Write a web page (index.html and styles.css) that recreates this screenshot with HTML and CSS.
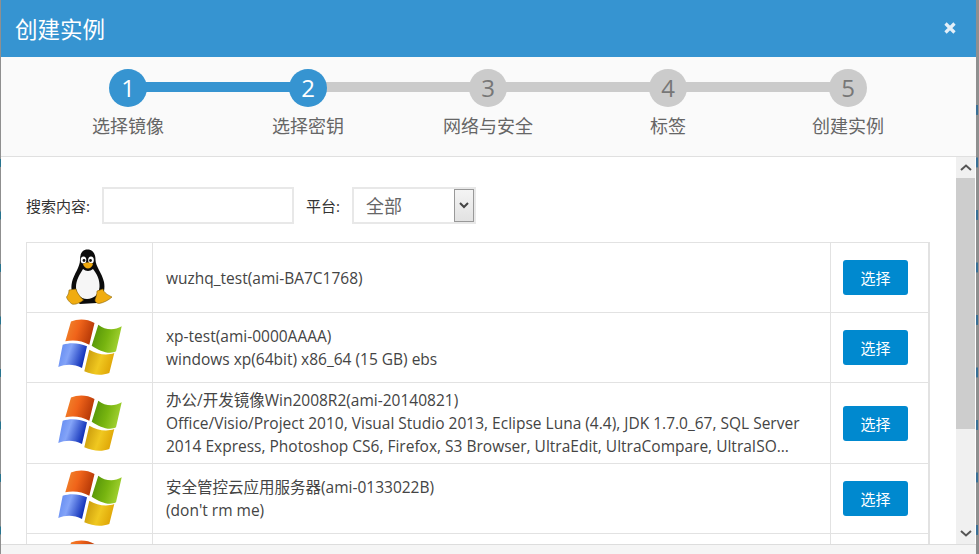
FILE: index.html
```html
<!DOCTYPE html>
<html lang="zh">
<head>
  <meta charset="UTF-8">
  <meta name="viewport" content="width=device-width, initial-scale=1.0">
  <title>创建实例</title>
  <link rel="stylesheet" href="styles.css">
</head>
<body>
  <svg class="defs" width="0" height="0" aria-hidden="true">
    <defs>
      <linearGradient id="red" x1="0" y1="0" x2="1" y2="0.3">
        <stop offset="0" stop-color="#f08a30"/><stop offset="0.5" stop-color="#f0641a"/><stop offset="1" stop-color="#b83a08"/>
      </linearGradient>
      <linearGradient id="green" x1="0" y1="0" x2="1" y2="0.3">
        <stop offset="0" stop-color="#4c8c08"/><stop offset="0.6" stop-color="#78b510"/><stop offset="1" stop-color="#a0d030"/>
      </linearGradient>
      <linearGradient id="blue" x1="0" y1="0" x2="1" y2="0.3">
        <stop offset="0" stop-color="#5c86f0"/><stop offset="0.45" stop-color="#84a4f8"/><stop offset="1" stop-color="#1030b8"/>
      </linearGradient>
      <linearGradient id="yellow" x1="0" y1="0" x2="1" y2="0.3">
        <stop offset="0" stop-color="#c09008"/><stop offset="0.6" stop-color="#f0c820"/><stop offset="1" stop-color="#e0a808"/>
      </linearGradient>
      <symbol id="winlogo" viewBox="0 0 64 57">
        <path fill="url(#red)" d="M13 2.500C20 -0.500 29 -0.500 36.500 4L31.300 25.700C24 21.500 15 20.500 7.300 22.300Z"/>
        <path fill="url(#green)" d="M40.300 5.700C47 11 56 12 63.700 7.300L58 32.300C51 36 42 32 33.700 26.700Z"/>
        <path fill="url(#blue)" d="M4.700 25.700C13 23 21 24 29 27.300L24 49C16 45 8 45 0.300 48Z"/>
        <path fill="url(#yellow)" d="M31.300 30.700C39 35 48 37 56.300 34L51.300 54C43 57 35 56 26.300 52.300Z"/>
      </symbol>
      <symbol id="tux" viewBox="0 0 47 57">
        <path fill="#0c0c0c" d="M21.500 0.500C27 0.500 29.500 5 29.500 11C29.500 17 36 24 38 33C39.500 41 37 50 31 54L14 55C7 50 4 42 6 33C8 25 14 18 14 11C14 5 16 0.500 21.500 0.500Z"/>
        <path fill="#f6f6f6" d="M17 20C20 22.500 24 22.500 27 20C31 25 34 31 33.500 38C33 45 28 50 21 50C14 50 10 44 10 38C10 31 14 25 17 20Z"/>
        <ellipse cx="17.500" cy="11" rx="2.800" ry="3.500" fill="#fff"/>
        <ellipse cx="25" cy="11" rx="2.800" ry="3.500" fill="#fff"/>
        <circle cx="18" cy="11.500" r="1.400" fill="#111"/>
        <circle cx="24.500" cy="11.500" r="1.400" fill="#111"/>
        <path fill="#eda80f" d="M17 15C19.500 13 24.500 13 27 15C26.500 17.500 24 19.500 22 19.500C20 19.500 17.500 17.500 17 15Z"/>
        <path fill="#f0ac10" stroke="#8a6408" stroke-width="0.600" d="M3 41L10 40C11 44 15 49 17.500 51C14 54 9 56 6 55C3 53 1 50 0.500 48C2 46 3 44 3 41Z"/>
        <path fill="#f0ac10" stroke="#8a6408" stroke-width="0.600" d="M31 42L37 40C38 44 42 46 46 48C43 51 37 54 33 54.500C31 54.500 29 53 29 51C30 48 31 45 31 42Z"/>
      </symbol>
    </defs>
  </svg>

  <div class="modal">
    <div class="modal-header">
      <h3>创建实例</h3>
      <svg class="close" width="12" height="12" viewBox="0 0 12 12"><path d="M1.500 1.500L10.500 10.500M10.500 1.500L1.500 10.500" stroke="#e4eff8" stroke-width="3.200"/></svg>
    </div>

    <div class="steps">
      <div class="step done"><span class="num">1</span><span class="name">选择镜像</span></div>
      <div class="step active"><span class="num">2</span><span class="name">选择密钥</span></div>
      <div class="step"><span class="num">3</span><span class="name">网络与安全</span></div>
      <div class="step"><span class="num">4</span><span class="name">标签</span></div>
      <div class="step"><span class="num">5</span><span class="name">创建实例</span></div>
    </div>

    <div class="modal-body">
      <div class="content">
        <form class="search">
          <label class="search-label">搜索内容:</label>
          <input type="text" class="search-input">
          <label class="platform-label">平台:</label>
          <div class="select">
            <span class="select-value">全部</span>
            <span class="select-arrow">
              <svg width="10" height="7" viewBox="0 0 10 7"><path d="M1 1L5 5L9 1" fill="none" stroke="#444" stroke-width="2"/></svg>
            </span>
          </div>
        </form>

        <table class="images">
          <tr class="row-a">
            <td class="logo"><svg class="tux" width="47" height="57"><use href="#tux"/></svg></td>
            <td class="desc">wuzhq_test(ami-BA7C1768)</td>
            <td class="action"><button type="button">选择</button></td>
          </tr>
          <tr class="row-a">
            <td class="logo"><svg width="64" height="57"><use href="#winlogo"/></svg></td>
            <td class="desc">xp-test(ami-0000AAAA)<br>windows xp(64bit) x86_64 (15 GB) ebs</td>
            <td class="action"><button type="button">选择</button></td>
          </tr>
          <tr class="row-c">
            <td class="logo"><svg width="64" height="57"><use href="#winlogo"/></svg></td>
            <td class="desc">办公/开发镜像Win2008R2(ami-20140821)<br>Office/Visio/Project 2010, Visual Studio 2013, Eclipse Luna (4.4), JDK 1.7.0_67, SQL Server 2014 Express, Photoshop CS6, Firefox, S3 Browser, UltraEdit, UltraCompare, UltraISO...</td>
            <td class="action"><button type="button">选择</button></td>
          </tr>
          <tr class="row-a">
            <td class="logo"><svg width="64" height="57"><use href="#winlogo"/></svg></td>
            <td class="desc">安全管控云应用服务器(ami-0133022B)<br>(don't rm me)</td>
            <td class="action"><button type="button">选择</button></td>
          </tr>
          <tr class="row-a">
            <td class="logo"><svg width="64" height="57"><use href="#winlogo"/></svg></td>
            <td class="desc"></td>
            <td class="action"></td>
          </tr>
        </table>
      </div>

      <div class="scrollbar">
        <div class="scroll-btn up"><svg width="12" height="7" viewBox="0 0 12 7"><path d="M1 6L6 1.500L11 6" fill="none" stroke="#555" stroke-width="2"/></svg></div>
        <div class="scroll-thumb"></div>
        <div class="scroll-track"></div>
        <div class="scroll-btn down"><svg width="12" height="7" viewBox="0 0 12 7"><path d="M1 1L6 5.500L11 1" fill="none" stroke="#555" stroke-width="2"/></svg></div>
      </div>
    </div>

    <div class="modal-footer"></div>
  </div>
</body>
</html>
```

FILE: styles.css
```css
html, body {
  height: 100%;
}
body {
  margin: 0;
  overflow: hidden;
  background-color: #8f8f8f;
  font-family: "Open Sans", "Noto Sans CJK SC", sans-serif;
  color: #555;
}
/* bits of the page behind the dialog, showing at both edges */
body::before, body::after {
  content: "";
  position: absolute;
  bottom: 0;
  background-repeat: repeat-y;
  background-size: 100% 52.5px;
}
body::before {
  left: 0;
  top: 159px;
  width: 1px;
  background-image: linear-gradient(#27748f 0 8px, transparent 8px);
}
body::after {
  right: 0;
  top: 105px;
  width: 3px;
  background-image: linear-gradient(to right, #3a6f96 0 2px, transparent 2px);
  background-size: 3px 52.5px;
  mask-image: linear-gradient(black 0 10px, transparent 10px);
  mask-size: 3px 52.5px;
}
.defs {
  display: block;
  height: 0;
}
.modal {
  height: 554px;
  margin: 0 3px 0 1px;
  display: flex;
  flex-direction: column;
  background: white;
}
.modal-header {
  height: 57px;
  flex: none;
  display: flex;
  align-items: center;
  justify-content: space-between;
  padding: 0 20px 0 14px;
  background-color: #3694d1;
  box-sizing: border-box;
}
.modal-header h3 {
  margin: 0;
  font-size: 22.5px;
  font-weight: normal;
  color: white;
}
.close {
  margin-bottom: 2px;
}
.steps {
  height: 100px;
  flex: none;
  display: grid;
  grid-template-columns: repeat(5, 180px);
  padding: 12px 0 0 37px;
  background-color: #fafafa;
  border-bottom: 1px solid #e0e0e0;
  box-sizing: border-box;
}
.step {
  position: relative;
  display: flex;
  flex-direction: column;
  align-items: center;
}
.step::after {
  content: "";
  position: absolute;
  top: 13px;
  left: 90px;
  width: 180px;
  height: 10px;
  background-color: #cbcbcb;
}
.step:last-child::after {
  display: none;
}
.step.done::after {
  background-color: #3694d1;
}
.num {
  position: relative;
  z-index: 1;
  width: 38px;
  height: 38px;
  line-height: 38px;
  border-radius: 50%;
  text-align: center;
  font-size: 24px;
  background-color: #cbcbcb;
  color: #777;
}
.done .num, .active .num {
  background-color: #3694d1;
  color: white;
}
.name {
  margin-top: 6px;
  font-size: 18px;
  line-height: 26px;
  color: #666;
}
.modal-body {
  flex: 1;
  min-height: 0;
  display: flex;
}
.content {
  flex: 1;
  min-width: 0;
  overflow: hidden;
  padding: 30px 26px 0 25px;
}
.search {
  display: flex;
  align-items: center;
  height: 37px;
  margin-bottom: 18px;
  font-size: 15px;
  color: #333;
}
.search-input {
  width: 192px;
  height: 37px;
  margin-left: 12px;
  padding: 0 10px;
  border: 2px solid #e8e8e8;
  box-sizing: border-box;
}
.platform-label {
  margin-left: 12px;
}
.select {
  width: 124px;
  height: 37px;
  margin-left: 12px;
  display: flex;
  justify-content: space-between;
  border: 2px solid #e8e8e8;
  box-sizing: border-box;
}
.select-value {
  padding-left: 12px;
  font-size: 18px;
  line-height: 34px;
  color: #666;
}
.select-arrow {
  width: 20px;
  display: flex;
  align-items: center;
  justify-content: center;
  background: linear-gradient(#f4f4f4, #e2e2e2);
  border: 1px solid #999;
  box-sizing: border-box;
}
.images {
  width: 904px;
  table-layout: fixed;
  border-collapse: collapse;
  font-size: 15.5px;
  line-height: 23px;
  color: #444;
}
.images td {
  border: 1px solid #e2e2e2;
  padding: 0;
}
.row-a {
  height: 70px;
}
.row-c {
  height: 81px;
}
.logo {
  width: 125px;
}
.logo svg {
  display: block;
  margin: 0 auto;
}
.images .desc {
  padding: 1px 13px 0;
}
.images .action {
  width: 85px;
  padding-left: 12px;
  border-right-width: 2px;
}
button {
  display: block;
  width: 65px;
  height: 35px;
  background-color: #0089cf;
  color: white;
  border: none;
  border-radius: 3px;
  font-family: inherit;
  font-size: 15px;
}
.scrollbar {
  width: 19px;
  flex: none;
  margin-right: 1px;
  display: flex;
  flex-direction: column;
  background-color: #f0f0f0;
}
.scroll-btn {
  height: 21px;
  flex: none;
  display: flex;
  align-items: center;
  justify-content: center;
}
.scroll-thumb {
  height: 251px;
  flex: none;
  background-color: #cdcdcd;
}
.scroll-track {
  flex: 1;
}
.modal-footer {
  height: 10px;
  flex: none;
  box-sizing: border-box;
  background-color: #f5f5f5;
  border-top: 1px solid #ddd;
}
```
